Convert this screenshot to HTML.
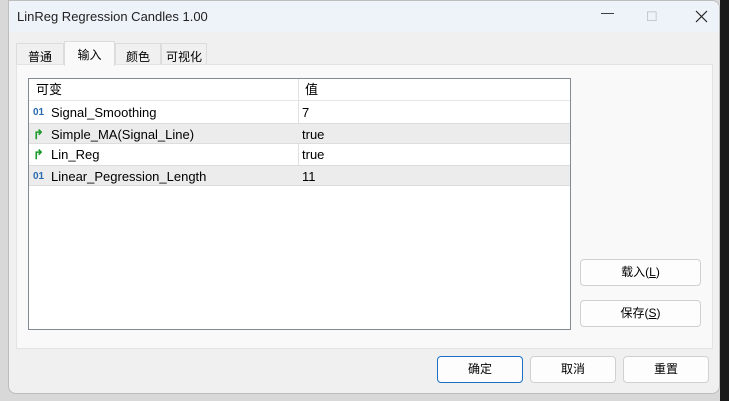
<!DOCTYPE html>
<html><head><meta charset="utf-8"><style>
*{box-sizing:border-box;margin:0;padding:0}
body{width:729px;height:401px;background:#d8d8d8;position:relative;overflow:hidden;font-family:"Liberation Sans","Noto Sans CJK SC",sans-serif;font-size:13px;color:#000}
.right{position:absolute;left:720px;top:0;width:9px;height:401px;background:#1a1a1a}
.win{position:absolute;left:8px;top:0;width:712px;height:394px;background:#f0f0f0;border:1px solid #bdbdbd;border-radius:0 8px 8px 8px;overflow:hidden}
.title{height:31px;background:#eef3fa;position:relative}
.title span{position:absolute;left:8px;top:8px;font-size:13px;color:#222}
.ctl{position:absolute;top:8px;font-size:14px;color:#333}
.tab{position:absolute;height:23px;border:1px solid #dcdcdc;border-bottom:none;background:#f0f0f0;font-size:12px;padding:4px 0 0;text-align:center}
.panel{position:absolute;left:7px;top:63px;width:697px;height:285px;background:#f9f9f9;border:1px solid #e3e3e3}
.tbl{position:absolute;left:28px;top:78px;width:543px;height:252px;background:#fff;border:1px solid #848a92}
.row{position:absolute;left:0;width:541px;height:21px;line-height:21px}
.row .n{position:absolute;left:22px}
.row .v{position:absolute;left:273px}
.row i{position:absolute;left:4px;font-style:normal;font-size:10px;color:#2a6ab0;font-weight:bold}
.g{color:#1a9a2a!important;font-size:13px!important}
.div{position:absolute;left:269px;top:0;width:1px;height:106px;background:#e0e0e0}
.btn{position:absolute;height:27px;border:1px solid #d0d0d0;border-radius:4px;background:#fdfdfd;text-align:center;line-height:25px;font-size:12px}
</style></head><body>
<div class="right"></div>
<div class="win">
<div class="title"><span>LinReg Regression Candles 1.00</span>
<span class="ctl" style="left:592px;top:4px">—</span>
<span class="ctl" style="left:637px;color:#bbb">☐</span>
<svg style="position:absolute;left:686px;top:9px" width="13" height="13"><path d="M1 1L12 12M12 1L1 12" stroke="#222" stroke-width="1.2"/></svg></div>
<div class="tab" style="left:7px;top:42px;width:48px">普通</div>
<div class="tab" style="left:55px;top:40px;height:25px;width:51px;background:#f9f9f9;z-index:2">输入</div>
<div class="tab" style="left:106px;top:42px;width:46px">颜色</div>
<div class="tab" style="left:152px;top:42px;width:46px">可视化</div>
<div class="panel"></div>
</div>
<div class="tbl">
<div class="div"></div>
<div class="row" style="top:0;height:22px;border-bottom:1px solid #e6e6e6"><span style="position:absolute;left:7px">可变</span><span class="v" style="left:276px">值</span></div>
<div class="row" style="top:23px"><i>01</i><span class="n">Signal_Smoothing</span><span class="v">7</span></div>
<div class="row" style="top:44px;background:#ececec;border-top:1px solid #ddd;border-bottom:1px solid #ddd"><i class="g">↱</i><span class="n">Simple_MA(Signal_Line)</span><span class="v">true</span></div>
<div class="row" style="top:65px"><i class="g">↱</i><span class="n">Lin_Reg</span><span class="v">true</span></div>
<div class="row" style="top:86px;background:#ececec;border-top:1px solid #ddd;border-bottom:1px solid #ddd"><i>01</i><span class="n">Linear_Pegression_Length</span><span class="v">11</span></div>
</div>
<div class="btn" style="left:580px;top:259px;width:121px">载入(<u>L</u>)</div>
<div class="btn" style="left:580px;top:300px;width:121px">保存(<u>S</u>)</div>
<div class="btn" style="left:437px;top:356px;width:86px;border-color:#1a6fc4">确定</div>
<div class="btn" style="left:530px;top:356px;width:86px">取消</div>
<div class="btn" style="left:623px;top:356px;width:86px">重置</div>
</body></html>
